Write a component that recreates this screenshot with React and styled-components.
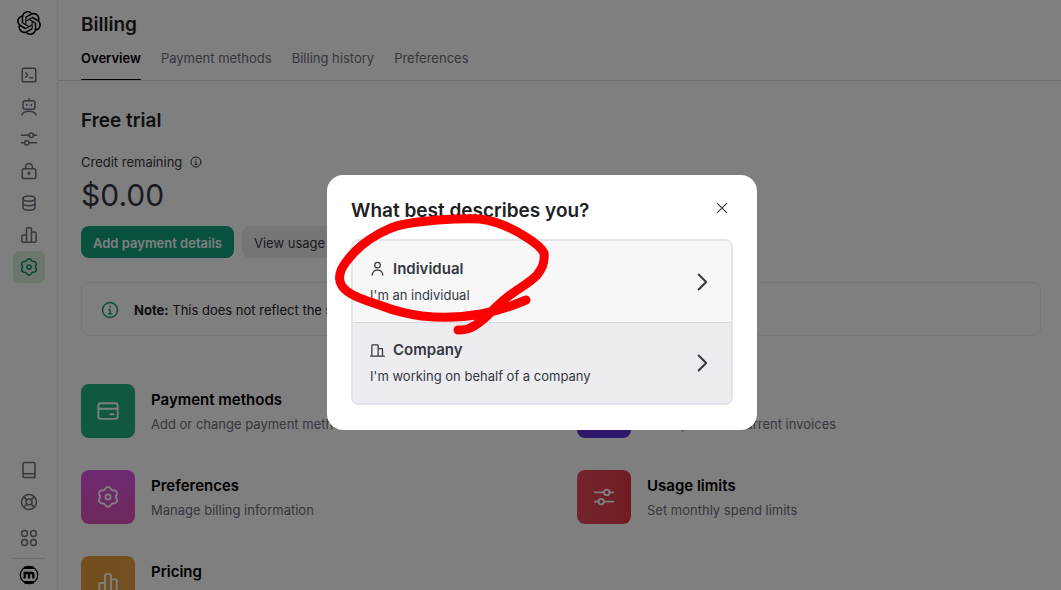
import React from "react";
import styled, { createGlobalStyle } from "styled-components";
import { SiOpenai } from "react-icons/si";

const GlobalStyle = createGlobalStyle`
  * { box-sizing: border-box; }
  html, body { margin: 0; height: 100%; }
  body {
    background: #fff;
    color: #202123;
    font-family: Inter, "Liberation Sans", sans-serif;
    font-size: 13px;
    line-height: 20px;
    overflow: hidden;
  }
  button { font: inherit; color: inherit; border: 0; background: none; padding: 0; cursor: pointer; text-align: left; }
  h1, h2, h3, p { margin: 0; }
  a { color: inherit; text-decoration: none; }
`;

const Shell = styled.div`
  display: flex;
  height: 100vh;
  overflow: hidden;
`;

const Sidebar = styled.nav`
  flex: none;
  width: 58px;
  display: flex;
  flex-direction: column;
  align-items: center;
  justify-content: space-between;
  padding: 9px 0 5px;
  border-right: 1px solid #ececf1;
`;

const NavGroup = styled.div`
  display: flex;
  flex-direction: column;
  align-items: center;
`;

const Brand = styled.a`
  display: flex;
  color: #000;
  padding: 2px;
  margin-bottom: 22px;
`;

const NavLink = styled.a`
  display: flex;
  align-items: center;
  justify-content: center;
  width: 32px;
  height: 32px;
  border-radius: 6px;
  color: ${(p) => (p.$active ? "#0a8a62" : "#6e6e80")};
  background: ${(p) => (p.$active ? "#d8ecd8" : "transparent")};
`;

const AppsLink = styled(NavLink)`
  height: 40px;
`;

const AccountLink = styled.a`
  display: flex;
  padding-top: 6px;
  border-top: 1px solid #d9d9e3;
  width: 32px;
  justify-content: center;
`;

const Main = styled.main`
  flex: 1;
  min-width: 0;
`;

const Header = styled.header`
  padding: 13px 23px 0;
  border-bottom: 1px solid #dcdce4;
`;

const PageTitle = styled.h1`
  font-size: 19px;
  line-height: 24px;
  font-weight: 600;
`;

const Tabs = styled.nav`
  display: flex;
  gap: 20px;
  margin-top: 11px;
`;

const Tab = styled.a`
  height: 32px;
  color: ${(p) => (p.$active ? "#000" : "#6e6e80")};
  font-weight: ${(p) => (p.$active ? 600 : 400)};
  border-bottom: 1px solid ${(p) => (p.$active ? "#000" : "transparent")};
`;

const Content = styled.div`
  padding: 28px 20px 0 23px;
`;

const SectionTitle = styled.h2`
  font-size: 19px;
  line-height: 24px;
  font-weight: 600;
`;

const CreditLabel = styled.div`
  display: flex;
  align-items: center;
  gap: 8px;
  margin-top: 19px;
  color: #353740;
`;

const Amount = styled.div`
  margin-top: 3px;
  font-size: 30px;
  line-height: 40px;
  color: #353740;
`;

const Actions = styled.div`
  display: flex;
  gap: 8px;
  margin-top: 11px;
`;

const ActionButton = styled.button`
  height: 32px;
  padding: 1px 12px 0;
  border-radius: 8px;
  font-weight: ${(p) => (p.$primary ? 600 : 400)};
  color: ${(p) => (p.$primary ? "#fff" : "#353740")};
  background: ${(p) => (p.$primary ? "#10a37f" : "#ececf1")};
`;

const Note = styled.div`
  display: flex;
  align-items: center;
  gap: 15px;
  height: 54px;
  margin-top: 24px;
  padding: 1px 19px 0;
  border: 1px solid #ececf1;
  border-radius: 8px;
  & > svg { color: #10a37f; }
`;

const CardGrid = styled.div`
  display: grid;
  grid-template-columns: repeat(2, minmax(0, 464px));
  gap: 32px;
  margin-top: 48px;
`;

const Card = styled.a`
  display: flex;
  gap: 16px;
`;

const CardTile = styled.span`
  display: flex;
  align-items: center;
  justify-content: center;
  width: 54px;
  height: 54px;
  border-radius: 8px;
  color: #fff;
  background: ${(p) => p.$fill};
`;

const CardText = styled.div`
  padding-top: 6px;
`;

const CardTitle = styled.h3`
  font-size: 15px;
  line-height: 20px;
  font-weight: 600;
  color: #000;
`;

const CardHint = styled.p`
  margin-top: 4px;
  color: #6e6e80;
`;

const Overlay = styled.div`
  position: fixed;
  inset: 0;
  display: flex;
  align-items: center;
  justify-content: center;
  padding: 15px 0 0 23px;
  background: rgba(0, 0, 0, 0.5);
`;

const Dialog = styled.section`
  position: relative;
  width: 430px;
  max-width: 100%;
  padding: 24px 24px 25px;
  border-radius: 16px;
  background: #fff;
`;

const DialogHeader = styled.div`
  display: flex;
  align-items: flex-start;
  justify-content: space-between;
  padding-right: 4px;
`;

const DialogTitle = styled.h2`
  font-size: 19px;
  line-height: 24px;
  font-weight: 600;
`;

const CloseButton = styled.button`
  display: flex;
  align-items: center;
  height: 18px;
  color: #353740;
`;

const Options = styled.div`
  margin-top: 16px;
  border: 2px solid #e3e3ec;
  border-radius: 8px;
  overflow: hidden;
`;

const Option = styled.button`
  display: flex;
  align-items: center;
  justify-content: space-between;
  width: 100%;
  height: 81px;
  padding: 0 19px 0 17px;
  color: #353740;
  background: ${(p) => (p.$hovered ? "#ececf1" : "#f7f7f8")};
  & + & { border-top: 1px solid #d9d9e3; }
`;

const OptionName = styled.span`
  display: flex;
  align-items: center;
  gap: 8px;
  font-size: 15px;
  font-weight: 600;
`;

const OptionHint = styled.span`
  display: block;
  margin-top: 6px;
`;

const Scribble = styled.svg`
  position: absolute;
  left: 0;
  top: 0;
  overflow: visible;
  pointer-events: none;
`;

const icons = {
  terminal: (
    <>
      <rect x="3" y="3" width="18" height="18" rx="2.5" />
      <path d="M7.5 9l3 3-3 3M13 15.5h4" />
    </>
  ),
  robot: (
    <>
      <path d="M12 1V4" />
      <rect x="4" y="3.500" width="16" height="11.500" rx="3" />
      <path d="M9 8.500v1.500M15 8.500v1.500M2.500 22.500c1.500-3.200 5-4.800 9.500-4.800s8 1.600 9.500 4.800" />
    </>
  ),
  sliders: (
    <>
      <path d="M2 7h10M18 7h4M2 17h4M12 17h10" />
      <circle cx="15" cy="7" r="3" />
      <circle cx="9" cy="17" r="3" />
    </>
  ),
  lock: (
    <>
      <rect x="3" y="9" width="18" height="13" rx="2.500" />
      <path d="M7.500 9V6.500a4.500 4.500 0 0 1 9 0V9M12 14v3" />
      <circle cx="12" cy="14.500" r="1" />
    </>
  ),
  database: (
    <>
      <ellipse cx="12" cy="6" rx="8" ry="3.500" />
      <path d="M4 6v12c0 2 3.500 3.500 8 3.500s8-1.500 8-3.500V6M4 12c0 2 3.500 3.500 8 3.500s8-1.500 8-3.500" />
    </>
  ),
  bars: (
    <path d="M8.700 21.500V3.800A1.500 1.500 0 0 1 10.200 2.300h3.600a1.500 1.500 0 0 1 1.500 1.500v17.700M8.700 12H4a1.500 1.500 0 0 0-1.500 1.500V20A1.500 1.500 0 0 0 4 21.500h16a1.500 1.500 0 0 0 1.500-1.500V9.500A1.500 1.500 0 0 0 20 8h-4.700" />
  ),
  gear: (
    <>
      <path d="M9.700 2.600a2.700 2.700 0 0 1 4.600 0l.5.800a2 2 0 0 0 1.800 1h1a2.700 2.700 0 0 1 2.300 4l-.5.900a2 2 0 0 0 0 2l.5.900a2.700 2.700 0 0 1-2.300 4h-1a2 2 0 0 0-1.800 1l-.5.800a2.700 2.700 0 0 1-4.600 0l-.5-.8a2 2 0 0 0-1.800-1h-1a2.700 2.700 0 0 1-2.300-4l.5-.9a2 2 0 0 0 0-2l-.5-.9a2.700 2.700 0 0 1 2.300-4h1a2 2 0 0 0 1.800-1z" transform="translate(-2.400 -.500) scale(1.200)" strokeWidth="1.700" />
      <circle cx="12" cy="12" r="2.800" />
    </>
  ),
  book: (
    <path d="M4 18.500V4a2 2 0 0 1 2-2h12a2 2 0 0 1 2 2v18H6a2 2 0 0 1-2-2v-1.500A1.500 1.500 0 0 1 5.500 17H20" />
  ),
  lifebuoy: (
    <>
      <circle cx="12" cy="12" r="10" />
      <circle cx="12" cy="12" r="4" />
      <path d="M5 5l4.200 4.200M14.800 14.800L19 19M19 5l-4.200 4.200M9.200 14.800L5 19" />
    </>
  ),
  apps: (
    <>
      <circle cx="6" cy="6" r="3.900" />
      <circle cx="18" cy="6" r="3.900" />
      <circle cx="6" cy="18" r="3.900" />
      <circle cx="18" cy="18" r="3.900" />
    </>
  ),
  info: (
    <>
      <circle cx="12" cy="12" r="10" />
      <path d="M10.500 11.500H12V17M10 17h4M12 7v1" />
    </>
  ),
  card: (
    <>
      <rect x="1.500" y="3.500" width="21" height="17" rx="2.500" />
      <path d="M1.500 9.500h21M14.500 15.500h3.500" />
    </>
  ),
  person: (
    <>
      <circle cx="12" cy="6.500" r="4.500" />
      <path d="M3.500 22.500c.3-4.800 3.500-8 8.500-8s8.200 3.200 8.500 8" />
    </>
  ),
  building: (
    <path d="M1 21h22M3 21V4a1 1 0 0 1 1-1h8a1 1 0 0 1 1 1v17M13 9h6a1 1 0 0 1 1 1v11" />
  ),
  close: <path d="M4 4l16 16M20 4L4 20" />,
  chevron: <path d="M8 3l9 9-9 9" />,
};

const Icon = ({ name, size = 18, weight = 2 }) => (
  <svg
    width={size}
    height={size}
    viewBox="0 0 24 24"
    fill="none"
    stroke="currentColor"
    strokeWidth={weight}
    strokeLinecap="round"
    strokeLinejoin="round"
    aria-hidden="true"
  >
    {icons[name]}
  </svg>
);

const AccountMark = () => (
  <svg width="20" height="20" viewBox="0 0 20 20" aria-hidden="true">
    <circle cx="10" cy="10" r="8.700" fill="#fff" stroke="#000" strokeWidth="1.300" />
    <path d="M5 2.800h10M5 17.200h10" stroke="#000" strokeWidth="2.600" />
    <path
      d="M5.700 13.500V8h7.300a1.300 1.300 0 0 1 1.300 1.300v4.200M10 8v5.500"
      fill="none"
      stroke="#000"
      strokeWidth="2.300"
    />
  </svg>
);

const navItems = [
  ["terminal", "Playground"],
  ["robot", "Assistants"],
  ["sliders", "Fine-tuning"],
  ["lock", "API keys"],
  ["database", "Storage"],
  ["bars", "Usage"],
  ["gear", "Settings"],
];

const cards = [
  ["card", "Payment methods", "Add or change payment method", "#20b083"],
  ["book", "Billing history", "View past and current invoices", "#5a30d8"],
  ["gear", "Preferences", "Manage billing information", "linear-gradient(#dc55e6, #dd52b4)"],
  ["sliders", "Usage limits", "Set monthly spend limits", "linear-gradient(90deg, #e6485c, #e03a44)"],
  ["bars", "Pricing", "", "linear-gradient(90deg, #e89c38, #e6a045)"],
];

const options = [
  ["person", "Individual", "I'm an individual"],
  ["building", "Company", "I'm working on behalf of a company"],
];

export default function App() {
  return (
    <>
      <GlobalStyle />
      <Shell>
        <Sidebar aria-label="Main">
          <NavGroup>
            <Brand href="#home" aria-label="Home">
              <SiOpenai size={24} />
            </Brand>
            {navItems.map(([icon, label]) => (
              <NavLink key={icon} href={`#${icon}`} aria-label={label} $active={icon === "gear"}>
                <Icon name={icon} />
              </NavLink>
            ))}
          </NavGroup>
          <NavGroup>
            <NavLink href="#docs" aria-label="Documentation">
              <Icon name="book" />
            </NavLink>
            <NavLink href="#help" aria-label="Help">
              <Icon name="lifebuoy" />
            </NavLink>
            <AppsLink href="#apps" aria-label="All products">
              <Icon name="apps" />
            </AppsLink>
            <AccountLink href="#account" aria-label="Account">
              <AccountMark />
            </AccountLink>
          </NavGroup>
        </Sidebar>
        <Main>
          <Header>
            <PageTitle>Billing</PageTitle>
            <Tabs aria-label="Billing sections">
              <Tab href="#overview" $active>Overview</Tab>
              <Tab href="#methods">Payment methods</Tab>
              <Tab href="#history">Billing history</Tab>
              <Tab href="#preferences">Preferences</Tab>
            </Tabs>
          </Header>
          <Content>
            <SectionTitle>Free trial</SectionTitle>
            <CreditLabel>
              Credit remaining <Icon name="info" size={12} />
            </CreditLabel>
            <Amount>$0.00</Amount>
            <Actions>
              <ActionButton $primary>Add payment details</ActionButton>
              <ActionButton>View usage</ActionButton>
            </Actions>
            <Note>
              <Icon name="info" />
              <p><strong>Note:</strong> This does not reflect the status of your account.</p>
            </Note>
            <CardGrid>
              {cards.map(([icon, title, hint, fill]) => (
                <Card key={title} href={`#${icon}`}>
                  <CardTile $fill={fill}>
                    <Icon name={icon} size={22} />
                  </CardTile>
                  <CardText>
                    <CardTitle>{title}</CardTitle>
                    {hint && <CardHint>{hint}</CardHint>}
                  </CardText>
                </Card>
              ))}
            </CardGrid>
          </Content>
        </Main>
      </Shell>
      <Overlay>
        <Dialog role="dialog" aria-modal="true" aria-labelledby="dialog-title">
          <DialogHeader>
            <DialogTitle id="dialog-title">What best describes you?</DialogTitle>
            <CloseButton aria-label="Close">
              <Icon name="close" size={14} />
            </CloseButton>
          </DialogHeader>
          <Options>
            {options.map(([icon, name, hint]) => (
              <Option key={name} $hovered={name === "Company"}>
                <span>
                  <OptionName>
                    <Icon name={icon} size={15} />
                    {name}
                  </OptionName>
                  <OptionHint>{hint}</OptionHint>
                </span>
                <Icon name="chevron" size={20} weight={2.4} />
              </Option>
            ))}
          </Options>
          <Scribble width="430" height="255" viewBox="327 175 430 255" aria-hidden="true">
            <path
              d="M526 300C512 306 497 311 481 314C465 317 441 318 422 316C408 314 395 311 382 306C365 300 349 296 342 286C336 277 342 266 350 257C360 245 376 234 391 228C405 222 422 222 437 220C451 219 467 218 480 219C496 221 512 228 526 237C534 242 541 247 544 253C545 261 542 269 537 275C530 283 514 291 505 299C499 304 494 309 489 314C483 320 477 325 470 328C466 330 462 330 458 330"
              fill="none"
              stroke="#fb0000"
              strokeWidth="9"
              strokeLinecap="round"
              strokeLinejoin="round"
            />
          </Scribble>
        </Dialog>
      </Overlay>
    </>
  );
}
